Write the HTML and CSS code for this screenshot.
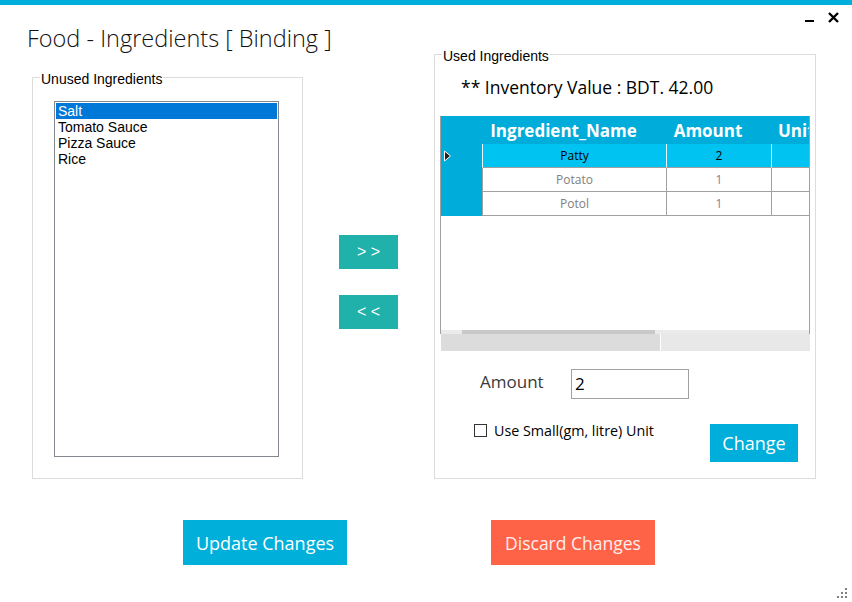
FILE: index.html
```html
<!DOCTYPE html>
<html>
<head>
<meta charset="utf-8">
<link rel="stylesheet" href="styles.css">
</head>
<body>
<div class="window">
  <div class="topbar"></div>
  <div class="win-controls">
    <span class="win-min"></span>
    <svg class="win-close" width="11" height="11" viewBox="0 0 11 11"><path d="M1 1 L10 10 M10 1 L1 10" stroke="#000" stroke-width="2.4"/></svg>
  </div>
  <div class="layout">
    <div class="col-left">
      <h1 class="title">Food - Ingredients [ Binding ]</h1>
      <fieldset class="group group-left">
        <legend>Unused Ingredients</legend>
        <div class="listbox">
          <div class="list-item selected">Salt</div>
          <div class="list-item">Tomato Sauce</div>
          <div class="list-item">Pizza Sauce</div>
          <div class="list-item">Rice</div>
        </div>
      </fieldset>
    </div>
    <div class="col-mid">
      <button class="move-btn">&gt; &gt;</button>
      <button class="move-btn">&lt; &lt;</button>
    </div>
    <fieldset class="group group-right">
      <legend>Used Ingredients</legend>
      <div class="inv-value">** Inventory Value : BDT. 42.00</div>
      <div class="grid-box">
        <div class="grid">
          <div class="gh rh"></div>
          <div class="gh">Ingredient_Name</div>
          <div class="gh">Amount</div>
          <div class="gh gh-unit">Unit</div>

          <div class="rh"><svg width="9" height="12" viewBox="0 0 9 12"><path d="M1.5 1 L7.5 6 L1.5 11 Z" fill="#222" stroke="#fff" stroke-width="1"/></svg></div>
          <div class="cell sel">Patty</div>
          <div class="cell sel">2</div>
          <div class="cell sel"></div>

          <div class="rh"></div>
          <div class="cell name">Potato</div>
          <div class="cell num">1</div>
          <div class="cell"></div>

          <div class="rh"></div>
          <div class="cell name">Potol</div>
          <div class="cell num">1</div>
          <div class="cell"></div>
        </div>
        <div class="grid-empty"></div>
        <div class="hscroll"><div class="hthumb"></div></div>
      </div>
      <div class="grid-strip">
        <div class="strip-a"></div>
        <div class="strip-b"></div>
      </div>
      <div class="amount-row">
        <span class="amount-label">Amount</span>
        <div class="textbox">2</div>
      </div>
      <div class="check-row">
        <label class="check"><span class="checkbox"></span>Use Small(gm, litre) Unit</label>
        <button class="change-btn">Change</button>
      </div>
    </fieldset>
  </div>
  <div class="footer">
    <button class="big-btn update">Update Changes</button>
    <button class="big-btn discard">Discard Changes</button>
  </div>
  <div class="grip">
    <svg width="12" height="12" viewBox="0 0 12 12" fill="#808080">
      <rect x="9" y="1" width="2" height="2"/>
      <rect x="5" y="5" width="2" height="2"/><rect x="9" y="5" width="2" height="2"/>
      <rect x="1" y="9" width="2" height="2"/><rect x="5" y="9" width="2" height="2"/><rect x="9" y="9" width="2" height="2"/>
    </svg>
  </div>
</div>
</body>
</html>
```
FILE: styles.css
```css
* { box-sizing: border-box; }
html, body { margin: 0; padding: 0; background: #fff; }
body { width: 852px; height: 602px; overflow: hidden; font-family: "Open Sans", "Noto Sans", sans-serif; }
.window { position: relative; width: 852px; height: 602px; }
.topbar { height: 5px; background: #00aedb; }

.win-controls { position: absolute; top: 12px; right: 13px; display: flex; align-items: flex-end; gap: 14px; }
.win-min { width: 9px; height: 2px; background: #000; margin-bottom: 1px; }
.win-close { display: block; }

.layout { display: flex; align-items: flex-start; padding-left: 27px; }

.col-left { width: 276px; }
.title { margin: 16px 0 0; font-weight: 300; font-size: 23.5px; line-height: 34px; color: #111; white-space: nowrap; }

.group { margin: 0; border: 1px solid #dcdcdc; min-width: 0; }
.group legend { font-family: "Liberation Sans", Arial, sans-serif; font-size: 14px; line-height: 15px; padding: 4px 1px 0; color: #000; }

.group-left { margin: 13px 0 0 5px; width: 271px; padding: 0 0 21px 21px; }
.group-left legend { margin-left: -14px; }
.listbox { margin-top: 14px; width: 225px; height: 356px; border: 1px solid #828790; padding: 1px; font-family: "Liberation Sans", Arial, sans-serif; font-size: 14px; }
.list-item { height: 16px; line-height: 16px; padding-left: 2px; color: #000; }
.list-item.selected { background: #0078d7; color: #fff; }

.col-mid { width: 59px; margin-left: 36px; padding-top: 230px; display: flex; flex-direction: column; gap: 26px; }
.move-btn { width: 59px; height: 34px; border: none; background: #20b2aa; color: #fff; font-family: "Liberation Sans", Arial, sans-serif; font-size: 16px; padding: 0; }

.group-right { margin: 40px 0 0 36px; width: 382px; padding: 0 5px 16px 5px; }
.group-right legend { margin-left: 2px; }
.inv-value { margin: 11px 0 0 21px; font-size: 17.5px; line-height: 24px; color: #000; }

.grid-box { margin-top: 17px; width: 370px; height: 218px; border-left: 1px solid #a0a0a0; border-right: 1px solid #a0a0a0; display: flex; flex-direction: column; overflow: hidden; }
.grid { display: grid; grid-template-columns: 41px 184px 105px 60px; grid-template-rows: 28px 24px 24px 24px; font-size: 12px; }
.gh { background: #00acd9; color: #fff; font-weight: 700; font-size: 17px; display: flex; align-items: center; justify-content: center; white-space: nowrap; padding-right: 21px; }
.gh-unit { justify-content: flex-start; padding-left: 7px; padding-right: 0; }
.rh { background: #00acd9; display: flex; align-items: center; padding-left: 2px; }
.cell { background: #fff; border-left: 1px solid #a0a0a0; border-bottom: 1px solid #a0a0a0; display: flex; align-items: center; justify-content: center; color: #808080; }
.cell.sel { background: #00c3f2; color: #000; border-left-color: #e8f8fc; border-bottom-color: #a0a0a0; }
.cell.num { color: #8c7aa0; }
.grid-empty { flex: 1; background: #fff; }
.hscroll { height: 4px; background: #ebebeb; flex: none; }
.hthumb { margin-left: 21px; width: 193px; height: 4px; background: #c8c8c8; }

.grid-strip { display: flex; width: 370px; height: 17px; }
.strip-a { width: 219px; background: #dcdcdc; margin-left: 1px; }
.strip-b { flex: 1; background: #e8e8e8; margin-left: 1px; }

.amount-row { display: flex; align-items: center; margin-top: 18px; }
.amount-label { margin-left: 40px; width: 91px; font-size: 17px; line-height: 22px; color: #3a3a3a; margin-top: -4px; }
.textbox { width: 118px; height: 30px; border: 1px solid #a0a0a0; font-size: 17px; line-height: 28px; padding-left: 3px; color: #000; }

.check-row { display: flex; align-items: flex-start; margin-top: 25px; }
.check { display: flex; align-items: center; margin-left: 34px; margin-top: -2px; font-size: 14.3px; color: #000; height: 17px; }
.checkbox { width: 13px; height: 13px; border: 1px solid #333; margin-right: 7px; background: #fff; }
.change-btn { margin-left: auto; margin-right: 12px; width: 88px; height: 38px; border: none; background: #00aedb; color: #fff; font-family: "Open Sans", sans-serif; font-size: 18px; padding: 0; }

.footer { display: flex; margin-top: 41px; padding-left: 183px; gap: 144px; }
.big-btn { width: 164px; height: 45px; border: none; color: #fff; font-family: "Open Sans", sans-serif; font-size: 18px; padding: 0; }
.big-btn.update { background: #00b0db; }
.big-btn.discard { background: #ff6347; color: #ffeeee; font-size: 17.5px; }

.grip { position: absolute; right: 4px; bottom: 3px; }
.grip svg { display: block; }
```
